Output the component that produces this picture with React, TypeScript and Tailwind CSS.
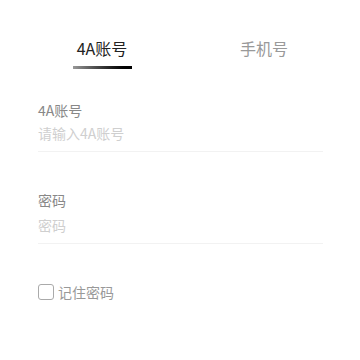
import { useState } from "react";

export default function App() {
    const [tab, setTab] = useState(0);
    const [account, setAccount] = useState("");
    const [password, setPassword] = useState("");
    const [remember, setRemember] = useState(false);

    return (
        <div
            className="w-[360px] h-[360px] bg-white overflow-hidden"
            style={{ fontFamily: '"Noto Sans CJK SC", "Noto Sans", sans-serif' }}
        >
            {/* tabs */}
            <div className="flex pt-[37px] pl-[21px]">
                <button
                    className="w-[162px] flex flex-col items-center"
                    onClick={() => setTab(0)}
                >
                    <span className={`text-[16px] leading-[22px] ${tab === 0 ? "text-[#222]" : "text-[#999]"}`}>4A账号</span>
                    <span
                        className={`mt-[7px] w-[59px] h-[3px] ${tab === 0 ? "bg-gradient-to-r from-[#999] to-black" : "bg-transparent"}`}
                    />
                </button>
                <button
                    className="w-[162px] flex flex-col items-center"
                    onClick={() => setTab(1)}
                >
                    <span className={`text-[16px] leading-[22px] ${tab === 1 ? "text-[#222]" : "text-[#999]"}`}>手机号</span>
                    <span
                        className={`mt-[7px] w-[59px] h-[3px] ${tab === 1 ? "bg-gradient-to-r from-[#999] to-black" : "bg-transparent"}`}
                    />
                </button>
            </div>

            {/* form */}
            <div className="pl-[38px] pr-[37px] pt-[31px]">
                <div className="border-b border-[#f2f2f2] pb-[8px]">
                    <label className="block text-[14px] leading-[20px] text-[#888]">4A账号</label>
                    <input
                        type="text"
                        value={account}
                        onChange={(e) => setAccount(e.target.value)}
                        placeholder="请输入4A账号"
                        className="mt-[3px] block w-full h-[20px] text-[14px] leading-[20px] text-[#333] placeholder:text-[#cfcfcf] outline-none"
                    />
                </div>

                <div className="mt-[38px] border-b border-[#f2f2f2] pb-[8px]">
                    <label className="block text-[14px] leading-[20px] text-[#888]">密码</label>
                    <input
                        type="password"
                        value={password}
                        onChange={(e) => setPassword(e.target.value)}
                        placeholder="密码"
                        className="mt-[5px] block w-full h-[20px] text-[14px] leading-[20px] text-[#333] placeholder:text-[#cfcfcf] outline-none"
                    />
                </div>

                <label className="mt-[38px] flex items-center gap-[4px] cursor-pointer">
                    <span
                        className={`w-[16px] h-[16px] rounded-[3px] border ${remember ? "border-[#333] bg-[#333]" : "border-[#aaa]"}`}
                        onClick={() => setRemember(!remember)}
                    />
                    <span className="text-[14px] leading-[20px] text-[#999]">记住密码</span>
                </label>
            </div>
        </div>
    );
}
